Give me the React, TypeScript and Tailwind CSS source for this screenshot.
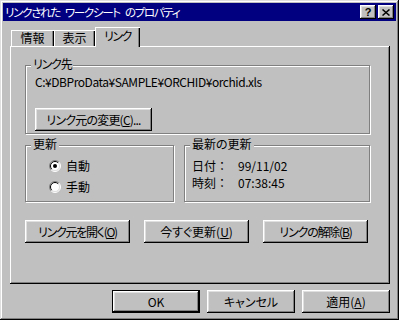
import React from "react";

const raised =
  "shadow-[inset_-1px_-1px_#000,inset_1px_1px_#fff,inset_-2px_-2px_#808080,inset_2px_2px_#dfdfdf]";

const Mn = ({ c }: { c: string }) => (
  <>
    (<span className="underline underline-offset-[1px]">{c}</span>)
  </>
);

const Button = ({
  children,
  w,
  isDefault,
}: {
  children: React.ReactNode;
  w: string;
  isDefault?: boolean;
}) => (
  <div
    className={`${w} h-[23px] flex items-center justify-center bg-[#c0c0c0] ${
      isDefault
        ? "shadow-[inset_0_0_0_1px_#000,inset_-2px_-2px_#000,inset_2px_2px_#fff,inset_-3px_-3px_#808080,inset_3px_3px_#dfdfdf]"
        : raised
    }`}
  >
    {children}
  </div>
);

const Radio = ({ checked }: { checked?: boolean }) => (
  <svg width="12" height="12" viewBox="0 0 12 12">
    <circle cx="6" cy="6" r="5" fill="#fff" />
    <path d="M2.1 9.9 A5.5 5.5 0 0 1 9.9 2.1" stroke="#808080" fill="none" />
    <path d="M9.9 2.1 A5.5 5.5 0 0 1 2.1 9.9" stroke="#fff" fill="none" />
    <path d="M2.8 9.2 A4.5 4.5 0 0 1 9.2 2.8" stroke="#000" fill="none" />
    <path d="M9.2 2.8 A4.5 4.5 0 0 1 2.8 9.2" stroke="#dfdfdf" fill="none" />
    {checked && <circle cx="6" cy="6" r="2" fill="#000" />}
  </svg>
);

const Group = ({
  label,
  className,
  labelClass = "",
  children,
}: {
  label: string;
  className: string;
  labelClass?: string;
  children: React.ReactNode;
}) => (
  <div
    className={`${className} flex flex-col border border-[#808080] shadow-[1px_1px_#fff,inset_1px_1px_#fff]`}
  >
    <span className={`self-start -mt-[9px] ml-[5px] px-[2px] bg-[#c0c0c0] leading-[14px] ${labelClass}`}>
      {label}
    </span>
    {children}
  </div>
);

export default function App() {
  return (
    <div className="w-[399px] h-[320px] bg-[#c0c0c0] p-[3px] flex flex-col text-[12px] text-black [font-family:'Noto_Sans_CJK_JP',sans-serif] [font-feature-settings:'palt'] shadow-[inset_-1px_-1px_#000,inset_1px_1px_#dfdfdf,inset_-2px_-2px_#808080,inset_2px_2px_#fff]">
      {/* title bar */}
      <div className="h-[18px] bg-[#000080] flex items-center pl-[2px] pr-[2px]">
        <div className="flex gap-[5px] text-white text-[11.5px] leading-[14px] tracking-[-1.3px]">
          <span>リンクされた</span>
          <span>ワークシート</span>
          <span>のプロパティ</span>
        </div>
        <div className="ml-auto flex gap-[2px]">
          <div className={`w-[16px] h-[14px] bg-[#c0c0c0] flex items-center justify-center ${raised}`}>
            <span className="text-[11px] font-bold leading-none [font-family:'Liberation_Sans',sans-serif]">?</span>
          </div>
          <div className={`w-[16px] h-[14px] bg-[#c0c0c0] flex items-center justify-center ${raised}`}>
            <svg width="8" height="7" viewBox="0 0 8 7">
              <path d="M0.5 0.5 L7.5 6.5 M7.5 0.5 L0.5 6.5" stroke="#000" strokeWidth="1.5" />
            </svg>
          </div>
        </div>
      </div>

      {/* tabs */}
      <div className="mt-[6px] ml-[8px] flex items-end">
        <div className="w-[43px] h-[16px] flex items-center justify-center leading-[14px] shadow-[inset_1px_1px_#fff,inset_-1px_0_#000,inset_-2px_0_#808080]">
          情報
        </div>
        <div className="w-[41px] h-[16px] flex items-center justify-center leading-[14px] shadow-[inset_1px_1px_#fff,inset_-1px_0_#000,inset_-2px_0_#808080]">
          表示
        </div>
        <div className="relative z-10 w-[45px] h-[20px] -mb-[1px] pb-[2px] bg-[#c0c0c0] flex items-center justify-center leading-[14px] tracking-[-1.5px] shadow-[inset_1px_1px_#fff,inset_-1px_0_#000,inset_-2px_0_#808080]">
          リンク
        </div>
      </div>

      {/* panel */}
      <div className="ml-[7px] w-[380px] h-[238px] flex flex-col pl-[15px] shadow-[inset_-1px_-1px_#000,inset_1px_1px_#fff,inset_-2px_-2px_#808080]">
        <Group label="リンク先" labelClass="tracking-[-1.2px]" className="mt-[19px] w-[345px] h-[69px]">
          <span className="ml-[9px] mt-[4px] leading-[14px] tracking-[-0.45px]">
            C:¥DBProData¥SAMPLE¥ORCHID¥orchid.xls
          </span>
          <div className="ml-[9px] mt-[19px]">
            <Button w="w-[117px]">
              <span className="tracking-[-0.8px]">
                リンク元の変更<Mn c="C" />...
              </span>
            </Button>
          </div>
        </Group>

        <div className="mt-[11px] flex gap-[10px]">
          <Group label="更新" className="w-[149px] h-[57px]">
            <div className="ml-[23px] mt-[8px] flex items-center gap-[5px] h-[14px]">
              <Radio checked />
              <span className="leading-[14px]">自動</span>
            </div>
            <div className="ml-[23px] mt-[7px] flex items-center gap-[5px] h-[14px]">
              <Radio />
              <span className="leading-[14px]">手動</span>
            </div>
          </Group>
          <Group label="最新の更新" className="w-[186px] h-[57px]">
            <div className="ml-[7px] mt-[8px] flex h-[14px] leading-[14px]">
              <span className="w-[46px] [font-feature-settings:normal]">日付：</span>
              <span>99/11/02</span>
            </div>
            <div className="ml-[7px] mt-[3px] flex h-[14px] leading-[14px]">
              <span className="w-[46px] [font-feature-settings:normal]">時刻：</span>
              <span>07:38:45</span>
            </div>
          </Group>
        </div>

        <div className="mt-[18px] flex gap-[14px]">
          <Button w="w-[105px]">
            <span className="tracking-[-1.3px]">
              リンク元を開く<Mn c="O" />
            </span>
          </Button>
          <Button w="w-[105px]">
            今すぐ更新<Mn c="U" />
          </Button>
          <Button w="w-[105px]">
            <span className="tracking-[-1.2px]">
              リンクの解除<Mn c="B" />
            </span>
          </Button>
        </div>
      </div>

      {/* bottom buttons */}
      <div className="mt-[6px] flex justify-end gap-[7px] pr-[6px]">
        <Button w="w-[88px]" isDefault>
          OK
        </Button>
        <Button w="w-[88px]">キャンセル</Button>
        <Button w="w-[88px]">
          適用<Mn c="A" />
        </Button>
      </div>
    </div>
  );
}
